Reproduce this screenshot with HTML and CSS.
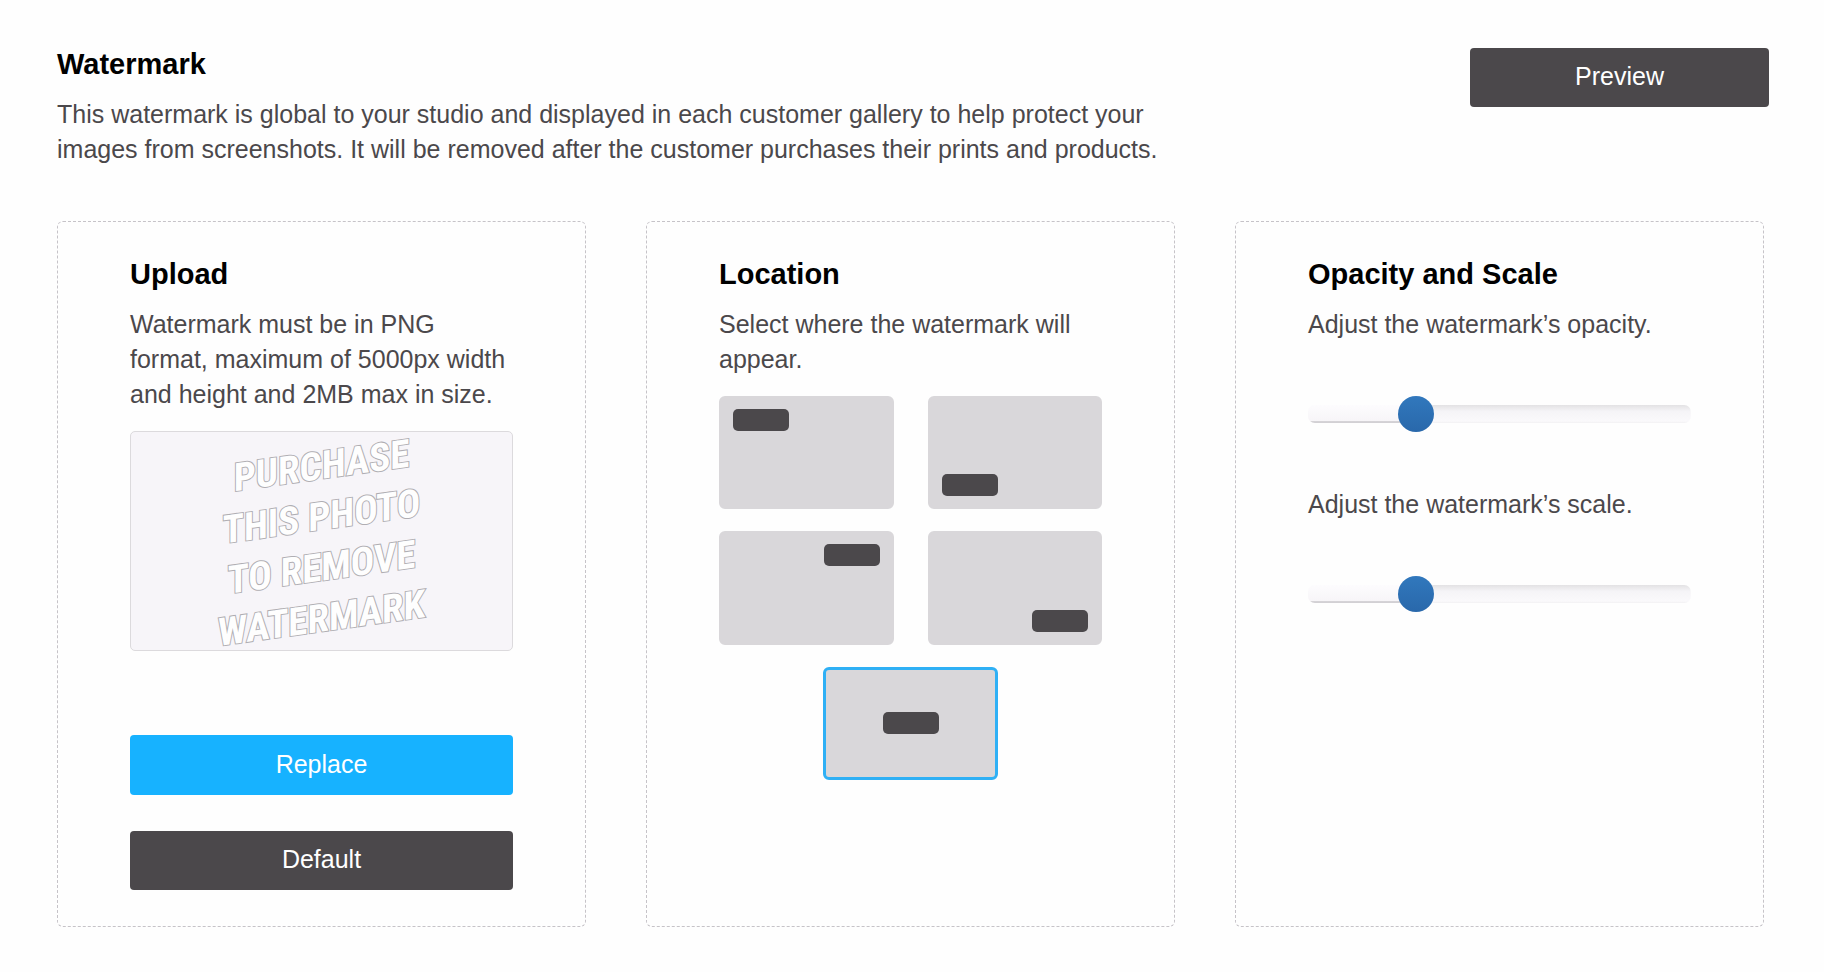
FILE: index.html
```
<!DOCTYPE html>
<html lang="en">
<head>
  <meta charset="UTF-8" />
  <meta name="viewport" content="width=device-width, initial-scale=1.0" />
  <title>Watermark</title>
  <link rel="stylesheet" href="styles.css">
</head>
<body>
  <main class="page">
    <header class="page-header">
      <div class="intro">
        <h1>Watermark</h1>
        <p>This watermark is global to your studio and displayed in each customer gallery to help protect your images from screenshots. It will be removed after the customer purchases their prints and products.</p>
      </div>
      <button type="button" class="btn btn-preview">Preview</button>
    </header>

    <div class="cards">
      <section class="card">
        <h2>Upload</h2>
        <p>Watermark must be in PNG format, maximum of 5000px width and height and 2MB max in size.</p>
        <div class="thumb">
          <svg class="thumb-art" viewBox="0 0 382 219" role="img" aria-label="Current watermark">
            <g transform="translate(191 0) skewY(-8)">
              <text x="0" y="47">PURCHASE</text>
              <text x="0" y="98">THIS PHOTO</text>
              <text x="0" y="149">TO REMOVE</text>
              <text x="0" y="200">WATERMARK</text>
            </g>
          </svg>
        </div>
        <div class="actions">
          <button type="button" class="btn btn-primary">Replace</button>
          <button type="button" class="btn">Default</button>
        </div>
      </section>

      <section class="card">
        <h2>Location</h2>
        <p id="location-help">Select where the watermark will appear.</p>
        <div class="spots" role="radiogroup" aria-labelledby="location-help">
          <label class="spot top-left"><input type="radio" name="location" value="top-left" aria-label="Top left"><span class="mark"></span></label>
          <label class="spot bottom-left"><input type="radio" name="location" value="bottom-left" aria-label="Bottom left"><span class="mark"></span></label>
          <label class="spot top-right"><input type="radio" name="location" value="top-right" aria-label="Top right"><span class="mark"></span></label>
          <label class="spot bottom-right"><input type="radio" name="location" value="bottom-right" aria-label="Bottom right"><span class="mark"></span></label>
          <label class="spot center"><input type="radio" name="location" value="center" aria-label="Center" checked><span class="mark"></span></label>
        </div>
      </section>

      <section class="card">
        <h2>Opacity and Scale</h2>
        <div class="sliders">
          <label for="opacity">Adjust the watermark’s opacity.</label>
          <input type="range" id="opacity" min="0" max="100" value="26">
          <label for="scale">Adjust the watermark’s scale.</label>
          <input type="range" id="scale" min="0" max="100" value="26">
        </div>
      </section>
    </div>
  </main>
</body>
</html>
```
FILE: styles.css
```
:root {
  --bg: #fefefe;
  --text: #4b484b;
  --dark: #4b484b;
  --blue: #17b2ff;
  --tile: #d9d7da;
}
* {
  box-sizing: border-box;
}
body {
  margin: 0;
  background-color: var(--bg);
  color: var(--text);
  font-family: "Liberation Sans", Helvetica, Arial, sans-serif;
  font-size: 25px;
  line-height: 35px;
}
.page {
  padding: 48px 55px 44px 57px;
}
h1, h2 {
  margin: 0 0 17px;
  color: #000;
  font-size: 29px;
  line-height: 32px;
}
p {
  margin: 0;
}
.page-header {
  display: flex;
  justify-content: space-between;
  align-items: flex-start;
  gap: 60px;
  margin-bottom: 54px;
}
.intro {
  max-width: 1130px;
}
.btn {
  display: block;
  width: 100%;
  height: 59px;
  padding: 0 0 2px;
  border: none;
  border-radius: 4px;
  background-color: var(--dark);
  color: #fff;
  font: inherit;
  cursor: pointer;
}
.btn-primary {
  height: 60px;
  background-color: var(--blue);
}
.btn-preview {
  flex: 0 0 299px;
}
.cards {
  display: grid;
  grid-template-columns: repeat(3, minmax(0, 1fr));
  gap: 60px;
  padding-right: 5px;
}
.card {
  padding: 36px 72px;
  border: 1px dashed #c6c3c8;
  border-radius: 6px;
}

/* current watermark */
.thumb {
  margin-top: 19px;
  border: 1px solid #dcdadd;
  border-radius: 5px;
  background-color: #f7f5f9;
}
.thumb-art {
  display: block;
  width: 100%;
  overflow: visible;
}
.thumb-art text {
  fill: #fefefe;
  stroke: #b0aeb3;
  stroke-width: 2px;
  paint-order: stroke;
  font-family: "Liberation Sans Narrow", "Roboto Condensed", "Open Sans Condensed", "Liberation Sans", sans-serif;
  font-size: 39px;
  font-weight: bold;
  text-anchor: middle;
}
.actions {
  display: grid;
  gap: 36px;
  margin-top: 84px;
}

/* location picker */
.spots {
  display: flex;
  flex-wrap: wrap;
  justify-content: center;
  gap: 22px 34px;
  margin-top: 19px;
}
.spot {
  display: flex;
  width: calc(50% - 17px);
  aspect-ratio: 174 / 113;
  padding: 10px 11px;
  border: 3px solid var(--tile);
  border-radius: 6px;
  background-color: var(--tile);
  cursor: pointer;
}
.spot:has(input:checked) {
  border-color: #2fb0f5;
}
.spot input {
  appearance: none;
  width: 0;
  height: 0;
  margin: 0;
}
.mark {
  width: 56px;
  height: 22px;
  border-radius: 5px;
  background-color: var(--dark);
}
.bottom-left, .bottom-right {
  align-items: flex-end;
}
.top-right, .bottom-right {
  justify-content: flex-end;
}
.center {
  justify-content: center;
  align-items: center;
}

/* sliders */
.sliders label {
  display: block;
}
.sliders input {
  display: block;
  appearance: none;
  width: 100%;
  height: 36px;
  margin: 54px 0 55px;
  background: none;
  cursor: pointer;
}
.sliders input:last-child {
  margin-bottom: 0;
}
.sliders input::-webkit-slider-runnable-track {
  height: 18px;
  border-radius: 7px;
  background:
    linear-gradient(#fdfcfe, #f7f5f8 88%, #d2d0d4 92%) left / 28% 100% no-repeat,
    linear-gradient(#e3e2e4, #f5f4f7 35%, #faf9fb 90%, #f2f1f3) right / 72% 100% no-repeat;
}
.sliders input::-webkit-slider-thumb {
  appearance: none;
  width: 36px;
  height: 36px;
  margin-top: -9px;
  border-radius: 50%;
  background: linear-gradient(#3178bd, #2968ab);
}
```
